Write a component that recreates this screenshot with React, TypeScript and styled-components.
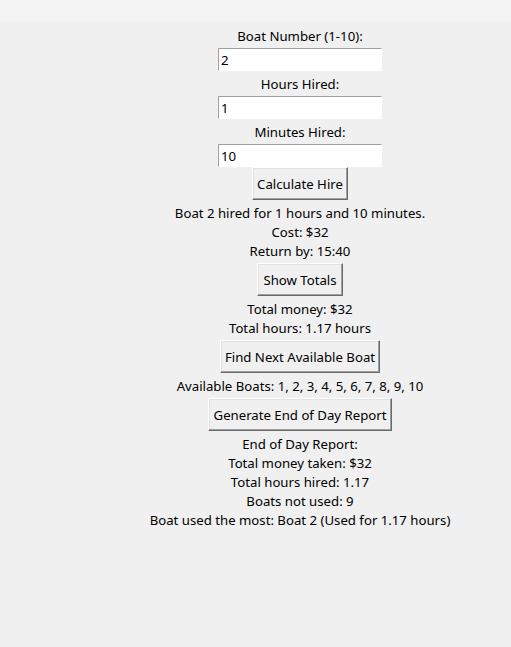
import React from "react";
import styled, { createGlobalStyle } from "styled-components";

const Global = createGlobalStyle`
  html, body {
    margin: 0;
    padding: 0;
    background: #f0f0f0;
  }
  body {
    font-family: "Noto Sans", "Open Sans", sans-serif;
    font-size: 13.2px;
    color: #000;
  }
`;

const TopStrip = styled.div`
  height: 22px;
  background: #f3f3f3;
`;

const Window = styled.div`
  box-sizing: border-box;
  width: 100%;
  padding: 1px 0 0 89px;
  display: flex;
  flex-direction: column;
  align-items: center;
`;

const Label = styled.div`
  padding: 4px 0 2px;
  line-height: 19px;
  text-align: center;
  white-space: pre;
`;

const Entry = styled.input`
  box-sizing: border-box;
  width: 164px;
  height: 23px;
  margin: 0;
  padding: 1px 2px 0;
  font: inherit;
  color: #000;
  background: #fff;
  border-style: solid;
  border-width: 1px;
  border-color: #a0a0a0 #fff #fff #a0a0a0;
  outline: none;
`;

const Button = styled.button<{ $w: number }>`
  box-sizing: border-box;
  width: ${(p) => p.$w}px;
  height: 33px;
  margin: 0;
  padding: 1px 0 0;
  font: inherit;
  color: #000;
  background: #f0f0f0;
  border-style: solid;
  border-width: 1px;
  border-color: #fff #696969 #696969 #fff;
  box-shadow: inset -1px -1px 0 #a0a0a0, inset 1px 1px 0 #e3e3e3;
  cursor: default;
`;

export default function App() {
  return (
    <>
      <Global />
      <TopStrip />
      <Window>
        <Label>Boat Number (1-10):</Label>
        <Entry defaultValue="2" />
        <Label>Hours Hired:</Label>
        <Entry defaultValue="1" />
        <Label>Minutes Hired:</Label>
        <Entry defaultValue="10" />
        <Button $w={96}>Calculate Hire</Button>
        <Label>{"Boat 2 hired for 1 hours and 10 minutes.\nCost: $32\nReturn by: 15:40"}</Label>
        <Button $w={86}>Show Totals</Button>
        <Label>{"Total money: $32\nTotal hours: 1.17 hours"}</Label>
        <Button $w={160}>Find Next Available Boat</Button>
        <Label>Available Boats: 1, 2, 3, 4, 5, 6, 7, 8, 9, 10</Label>
        <Button $w={184}>Generate End of Day Report</Button>
        <Label>
          {"End of Day Report:\nTotal money taken: $32\nTotal hours hired: 1.17\nBoats not used: 9\nBoat used the most: Boat 2 (Used for 1.17 hours)"}
        </Label>
      </Window>
    </>
  );
}
